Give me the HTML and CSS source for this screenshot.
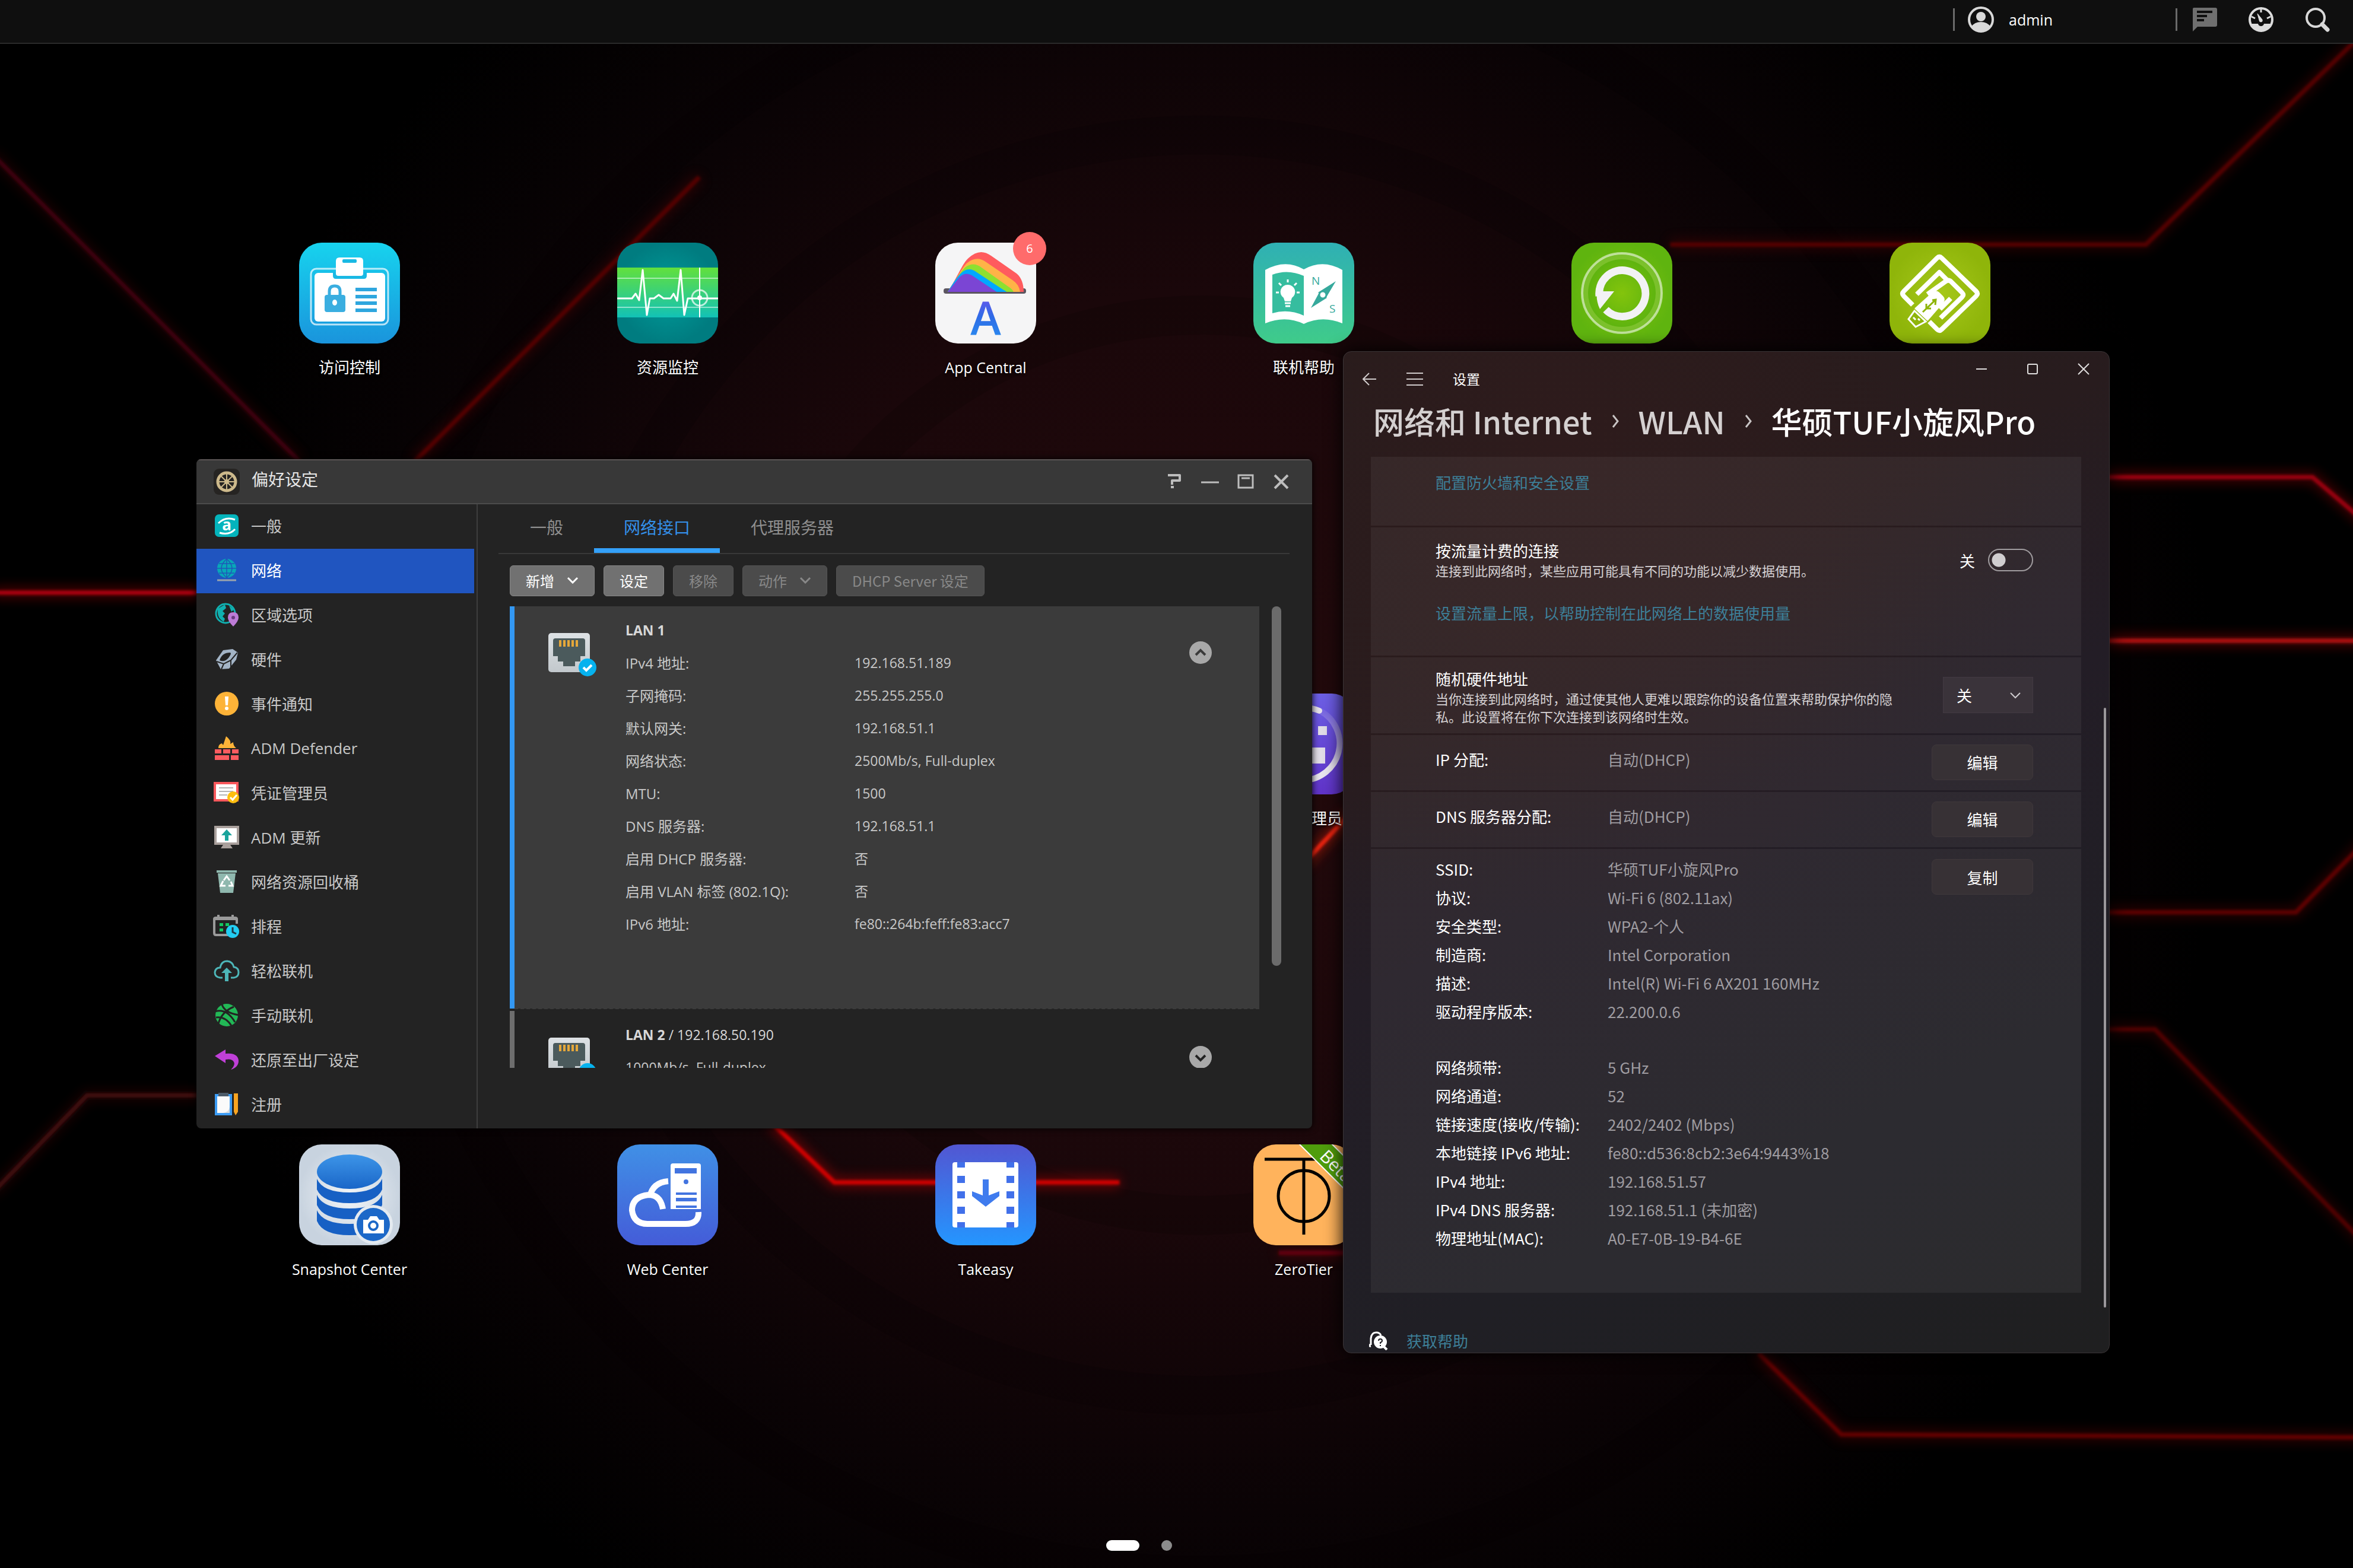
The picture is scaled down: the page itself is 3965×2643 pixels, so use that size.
FILE: index.html
```html
<!DOCTYPE html>
<html lang="zh-CN">
<head>
    <meta charset="UTF-8">
    <meta name="viewport" content="width=device-width, initial-scale=1.0">
    <title>ADM</title>
    <link rel="stylesheet" href="styles.css">
</head>
<body>

<!-- wallpaper -->
<svg class="wallpaper" viewBox="0 0 1568 1045" preserveAspectRatio="none" aria-hidden="true">
    <defs>
        <radialGradient id="wallGlow" gradientUnits="userSpaceOnUse" cx="800" cy="500" r="680">
            <stop offset="0" stop-color="#240a0c"/>
            <stop offset="0.45" stop-color="#1a070a"/>
            <stop offset="0.75" stop-color="#0a0305"/>
            <stop offset="1" stop-color="#000"/>
        </radialGradient>
        <filter id="soft" filterUnits="userSpaceOnUse" x="-50" y="-50" width="1700" height="1150"><feGaussianBlur stdDeviation="4"/></filter>
        <filter id="edge" filterUnits="userSpaceOnUse" x="-50" y="-50" width="1700" height="1150"><feGaussianBlur stdDeviation="0.8"/></filter>
        <g id="lines">
            <path d="M-5 103L200 308" stroke="#3c0407"/>
            <path d="M466 118L276 308" stroke="#520206"/>
            <path d="M1113 163H1430L1575 22" stroke="#520205"/>
            <path d="M1400 318H1541L1575 347" stroke="#960508"/>
            <path d="M1400 427H1575" stroke="#ac0c0c"/>
            <path d="M1400 608H1530L1575 562" stroke="#5c0406"/>
            <path d="M1400 686H1436L1575 828" stroke="#4e0305"/>
            <path d="M1172 902L1227 956L1575 958" stroke="#600306"/>
            <path d="M-5 395H140" stroke="#a80408"/>
            <path d="M-5 795L58 730H140" stroke="#400709"/>
            <path d="M514 748L556 788H746" stroke="#cf0000"/>
            <path d="M900 542L868 576" stroke="#e82408"/>
            <path d="M852 835H900" stroke="#5e0408"/>
        </g>
    </defs>
    <rect width="1568" height="1045" fill="#000"/>
    <rect width="1568" height="1045" fill="url(#wallGlow)"/>
    <g fill="none" stroke="#000" stroke-opacity="0.12" stroke-width="26">
        <circle cx="800" cy="510" r="300"/>
        <circle cx="800" cy="510" r="420"/>
        <circle cx="800" cy="510" r="540"/>
    </g>
    <use href="#lines" fill="none" stroke-width="7" opacity="0.45" filter="url(#soft)"/>
    <use href="#lines" fill="none" stroke-width="3" filter="url(#edge)"/>
</svg>

<header class="topbar">
    <span class="sep"></span>
    <button class="user" type="button">
        <svg viewBox="0 0 44 44" width="44" height="44"><circle cx="22" cy="22" r="20" fill="none" stroke="#d8d8d8" stroke-width="4"/><circle cx="22" cy="17" r="8" fill="#d8d8d8"/><path d="M6 34q5-8 16-8t16 8q-6 9-16 9T6 34z" fill="#d8d8d8"/></svg>
        <span>admin</span>
    </button>
    <span class="sep"></span>
    <div class="tray">
        <button type="button" aria-label="消息">
            <svg viewBox="0 0 42 42" width="42" height="42"><path d="M3 1h36q3 0 3 3v26q0 3-3 3H9l-8 8V3q0-2 2-2z" fill="#6f6f6f"/><path d="M8 8h26M8 15h17M8 22h12" stroke="#0f0f0f" stroke-width="4"/></svg>
        </button>
        <button type="button" aria-label="仪表板">
            <svg viewBox="0 0 42 42" width="42" height="42"><circle cx="21" cy="21" r="19" fill="none" stroke="#dcdcdc" stroke-width="4"/><path d="M4 28h12q1 4 5 4t5-4h12q-5 12-17 12T4 28z" fill="#dcdcdc"/><path d="M21 3v6M5 16l6 3M37 16l-6 3" stroke="#dcdcdc" stroke-width="3"/><path d="M15 11l8 10q1 4-2 4t-3-3z" fill="#dcdcdc" stroke="#dcdcdc"/></svg>
        </button>
        <button type="button" aria-label="搜索">
            <svg viewBox="0 0 42 42" width="42" height="42"><circle cx="18" cy="18" r="15" fill="none" stroke="#d8d8d8" stroke-width="4"/><path d="M29 29l9 9" stroke="#d8d8d8" stroke-width="7" stroke-linecap="round"/></svg>
        </button>
    </div>
</header>

<main class="desktop">
    <a class="app" href="#">
        <span class="app-icon">
        <svg viewBox="0 0 170 170">
            <defs><linearGradient id="g1" x2="0" y2="1"><stop stop-color="#17d3ee"/><stop offset="1" stop-color="#1a94dc"/></linearGradient></defs>
            <rect width="170" height="170" fill="url(#g1)"/>
            <rect x="20" y="44" width="130" height="94" rx="9" fill="none" stroke="#fff" stroke-opacity="0.7" stroke-width="3"/>
            <rect x="26" y="51" width="119" height="82" rx="6" fill="#fff"/>
            <path d="M57 50h57v6q0 5-5 5H62q-5 0-5-5z" fill="#19b9e4"/>
            <path d="M62 31q0-6 6-6h34q6 0 6 6v21q0 4-4 4H66q-4 0-4-4z" fill="#fff"/>
            <rect x="73" y="28" width="24" height="6" rx="2" fill="#19b9e4"/>
            <path d="M51 90v-8q0-9 9-9t9 9v8" fill="none" stroke="#3aaee0" stroke-width="5"/>
            <rect x="43" y="88" width="35" height="29" rx="4" fill="#3aaee0"/>
            <ellipse cx="60" cy="101" rx="4" ry="5" fill="#fff"/>
            <path d="M95 79h36M95 91h36M95 102h36M95 114h36" stroke="#2ea6de" stroke-width="6"/>
        </svg>
        </span>
        <span class="app-name">访问控制</span>
    </a>
    <a class="app" href="#">
        <span class="app-icon">
        <svg viewBox="0 0 170 170">
            <defs>
                <linearGradient id="g2" x2="0" y2="1"><stop stop-color="#62e03c"/><stop offset="1" stop-color="#12c2b6"/></linearGradient>
                <radialGradient id="g2b"><stop stop-color="#009c9a"/><stop offset="1" stop-color="#007c80"/></radialGradient>
            </defs>
            <rect width="170" height="170" fill="url(#g2b)"/>
            <rect y="42" width="170" height="84" fill="url(#g2)"/>
            <path d="M0 60h170M0 109h170" stroke="#fff" stroke-opacity="0.5" stroke-width="2"/>
            <path d="M139 42v84" stroke="#fff" stroke-width="2"/>
            <path d="M0 94h25l6-8 6 11 6-51 7 76 5-28h7l8-6 8 6h12l5-8 6 12 6-52 6 76 6-28h51" fill="none" stroke="#fff" stroke-width="3" stroke-linejoin="round"/>
            <circle cx="139" cy="93" r="13" fill="none" stroke="#fff" stroke-opacity="0.7" stroke-width="3"/>
            <circle cx="139" cy="93" r="4" fill="#fff"/>
        </svg>
        </span>
        <span class="app-name">资源监控</span>
    </a>
    <a class="app" href="#">
        <span class="app-icon">
        <svg viewBox="0 0 170 170">
            <defs>
                <linearGradient id="g3" x2="0" y2="1"><stop stop-color="#8a4af0"/><stop offset="0.5" stop-color="#2e6be6"/><stop offset="1" stop-color="#2a9af4"/></linearGradient>
                <clipPath id="c3"><rect width="170" height="83"/></clipPath>
            </defs>
            <rect width="170" height="170" fill="#f5f5f6"/>
            <rect x="14" y="77" width="139" height="9" rx="4" fill="#5b5560"/>
            <g clip-path="url(#c3)">
                <path d="M20 84C38 58 46 34 56 26q19-18 38-4l43 30q12 10 12 32z" fill="#ff5b5e"/>
                <path d="M20 84C38 60 44 42 54 34q16-13 32-1l44 30q12 8 13 21z" fill="#ffb347"/>
                <path d="M20 84C36 62 42 50 50 42q14-11 28 0l45 32q8 5 9 10z" fill="#8de030"/>
                <path d="M20 84C32 66 36 58 45 50q12-10 25 0l44 29q6 3 7 5z" fill="#00a8ff"/>
                <path d="M20 84l21-26q10-10 22-2l42 28z" fill="#7b45d4"/>
            </g>
            <text class="icon-a" x="85" y="155" text-anchor="middle" fill="url(#g3)">A</text>
        </svg>
        </span>
        <span class="badge">6</span>
        <span class="app-name" lang="en">App Central</span>
    </a>
    <a class="app" href="#">
        <span class="app-icon">
        <svg viewBox="0 0 170 170">
            <defs><linearGradient id="g4" x2="0" y2="1"><stop stop-color="#2fb0b4"/><stop offset="1" stop-color="#3fcb8a"/></linearGradient></defs>
            <rect width="170" height="170" fill="url(#g4)"/>
            <path d="M20 46q34-19 65-1 32-18 65 1v90q-34-14-65 1-31-15-65-1z" fill="#fff"/>
            <path d="M32 54q26-10 53 2v67q-26-12-53-4z" fill="#36bd9f"/>
            <path d="M58 71a12 12 0 0 1 7 22l-2 6H53l-2-6a12 12 0 0 1 7-22z" fill="#fff"/>
            <path d="M53 102h10M54 107h8M58 62v5M43 68l4 4M73 68l-4 4M38 84h5M73 84h5" stroke="#fff" stroke-width="3"/>
            <path d="M139 65l-16 27-14-8zM97 110l14-26 13 9z" fill="#36a99c"/>
            <circle cx="117" cy="88" r="6" fill="#fff" stroke="#36a99c" stroke-width="3"/>
            <text class="icon-ns" x="98" y="71">N</text>
            <text class="icon-ns" x="128" y="118">S</text>
        </svg>
        </span>
        <span class="app-name">联机帮助</span>
    </a>
    <a class="app" href="#" aria-label="备份与还原">
        <span class="app-icon">
        <svg viewBox="0 0 170 170">
            <defs><radialGradient id="g5"><stop stop-color="#83c40c"/><stop offset="1" stop-color="#5fb40f"/></radialGradient></defs>
            <rect width="170" height="170" fill="url(#g5)"/>
            <circle cx="85" cy="85" r="67" fill="#fff" fill-opacity="0.12" stroke="#fff" stroke-opacity="0.55" stroke-width="4"/>
            <circle cx="85" cy="85" r="57" fill="url(#g5)"/>
            <path d="M58 113A39 39 0 1 0 47 90" fill="none" stroke="#f2f2f4" stroke-width="13"/>
            <path d="M43 82h29l-24 30q-7-14-5-30z" fill="#f2f2f4"/>
        </svg>
        </span>
    </a>
    <a class="app" href="#" aria-label="外接设备">
        <span class="app-icon">
        <svg viewBox="0 0 170 170">
            <defs><radialGradient id="g6"><stop stop-color="#a6c81a"/><stop offset="1" stop-color="#8fb50a"/></radialGradient></defs>
            <rect width="170" height="170" fill="url(#g6)"/>
            <g fill="none" stroke="#fff" stroke-width="8" stroke-linejoin="round">
                <path d="M39 105L24 90q-4-4 0-8l56-56q4-4 8 0l58 56q4 4 0 8l-58 56q-4 4-8 0l-13-13"/>
                <path d="M46 87l38-37 13 13"/>
                <path d="M64 87l31-22q5-3 9 1l18 18q4 4 0 8l-36 35M85 112l18-18"/>
            </g>
            <path d="M74 84q5-3 9 1l6 6q4 4 1 9l-26 30-20-19z" fill="#fff" stroke="#fff" stroke-width="3" stroke-linejoin="round"/>
            <path d="M42 115l19 18-17 9-12-13z" fill="#8fb50a" stroke="#fff" stroke-width="3"/>
            <path d="M40 126l4 4M48 128l3 3" stroke="#fff" stroke-width="3"/>
            <path d="M56 117l22-21M62 103v8h8M72 97l6-1-1 9" fill="none" stroke="#8fb50a" stroke-width="3"/>
        </svg>
        </span>
    </a>
    <a class="app app-mid" href="#">
        <span class="app-icon">
        <svg viewBox="0 0 170 170">
            <defs>
                <linearGradient id="g7" x2="0" y2="1"><stop stop-color="#6c5fe4"/><stop offset="1" stop-color="#6033c8"/></linearGradient>
                <linearGradient id="g7b" x2="0" y2="1"><stop stop-color="#e8e4ee" stop-opacity="0.1"/><stop offset="0.5" stop-color="#e8e4ee" stop-opacity="0.6"/><stop offset="0.8" stop-color="#e8e4ee"/></linearGradient>
            </defs>
            <rect width="170" height="170" fill="url(#g7)"/>
            <path d="M112 29A62 62 0 0 1 85 146" fill="none" stroke="url(#g7b)" stroke-width="10"/>
            <path d="M85 146A62 62 0 0 1 85 24q14 0 26 5" fill="none" stroke="#e4e0ea" stroke-width="10" stroke-linecap="round"/>
            <path d="M109 55h15v15h-15zM93 91h28v27H93z" fill="#e0dce6"/>
        </svg>
        </span>
        <span class="app-name">系统管理员</span>
    </a>
    <a class="app app-last" href="#">
        <span class="app-icon">
        <svg viewBox="0 0 170 170">
            <defs>
                <radialGradient id="g8"><stop stop-color="#f2f5f8"/><stop offset="1" stop-color="#c8d3df"/></radialGradient>
                <linearGradient id="g8b" x2="0" y2="1"><stop stop-color="#3d95e8"/><stop offset="1" stop-color="#1a66c8"/></linearGradient>
            </defs>
            <rect width="170" height="170" fill="url(#g8)"/>
            <ellipse cx="85" cy="46" rx="55" ry="29" fill="url(#g8b)"/>
            <g fill="#1760c4">
                <path d="M30 58q10 23 55 23t55-23v18q-10 23-55 23T30 76z"/>
                <path d="M30 85q10 23 55 23t55-23v17q-10 24-55 24T30 102z"/>
                <path d="M30 111q10 23 55 23t55-23v18q-10 24-55 24T30 129z"/>
            </g>
            <circle cx="125" cy="135" r="33" fill="#e4eaf0"/>
            <circle cx="125" cy="135" r="28" fill="#1c68c8"/>
            <path d="M108 127h8l4-6h11l4 6h8v23h-35z" fill="#fff"/>
            <circle cx="125" cy="137" r="7" fill="#fff" stroke="#1c68c8" stroke-width="4"/>
        </svg>
        </span>
        <span class="app-name" lang="en">Snapshot Center</span>
    </a>
    <a class="app" href="#">
        <span class="app-icon">
        <svg viewBox="0 0 170 170">
            <defs><linearGradient id="g9" x2="0" y2="1"><stop stop-color="#4090e6"/><stop offset="1" stop-color="#445cd8"/></linearGradient></defs>
            <rect width="170" height="170" fill="url(#g9)"/>
            <path d="M90 36q0-4 4-4h43q4 0 4 4v73H90z" fill="#fff"/>
            <path d="M97 40h37v9H97zM99 81h35v4H99zM99 90h35v6H99zM99 103h35v4H99z" fill="#4274e0"/>
            <circle cx="116" cy="63" r="4" fill="#4274e0"/>
            <path d="M86 62q-26 2-31 26M77 109q-4-24-24-24-28 3-28 26 3 23 26 23h64q23 0 22-20" fill="none" stroke="#fff" stroke-width="10"/>
        </svg>
        </span>
        <span class="app-name" lang="en">Web Center</span>
    </a>
    <a class="app" href="#">
        <span class="app-icon">
        <svg viewBox="0 0 170 170">
            <defs><linearGradient id="g10" x2="0" y2="1"><stop stop-color="#5256d2"/><stop offset="1" stop-color="#2496ff"/></linearGradient></defs>
            <rect width="170" height="170" fill="url(#g10)"/>
            <rect x="29" y="30" width="111" height="110" rx="4" fill="#fff"/>
            <path d="M37 30h13v9H37zM37 53h13v12H37zM37 79h13v12H37zM37 105h13v12H37zM37 131h13v9H37zM120 30h13v9h-13zM120 53h13v12h-13zM120 79h13v12h-13zM120 105h13v12h-13zM120 131h13v9h-13z" fill="#4170ea"/>
            <path d="M80 59h10v27l18-7v8l-23 18-23-18v-8l18 7z" fill="#3f7bee"/>
        </svg>
        </span>
        <span class="app-name" lang="en">Takeasy</span>
    </a>
    <a class="app" href="#">
        <span class="app-icon">
        <svg viewBox="0 0 170 170">
            <rect width="170" height="170" fill="#ffb35c"/>
            <path d="M19 25h132M85 25v127" stroke="#000" stroke-width="5"/>
            <circle cx="85" cy="87" r="43" fill="none" stroke="#000" stroke-width="5"/>
            <path d="M77 -1L171 93V38L132 -1z" fill="#4f9d0c" stroke="#fff" stroke-width="2"/>
            <text class="icon-beta" transform="translate(110 22) rotate(45)">Beta</text>
        </svg>
        </span>
        <span class="app-name" lang="en">ZeroTier</span>
    </a>
</main>

<nav class="pager" aria-label="桌面分页">
    <button class="page active" type="button" aria-label="第 1 页"></button>
    <button class="page" type="button" aria-label="第 2 页"></button>
</nav>

<!-- ADM preferences -->
<section class="window prefs">
    <header class="prefs-head">
        <svg viewBox="0 0 44 44" width="44" height="44"><rect width="44" height="44" rx="9" fill="#262422"/><circle cx="22" cy="22" r="15" fill="none" stroke="#cdb98b" stroke-width="5"/><path d="M22 8v28M8 22h28M12 12l20 20M32 12L12 32" stroke="#cdb98b" stroke-width="2"/><circle cx="22" cy="22" r="4" fill="#cdb98b"/></svg>
        <h1>偏好设定</h1>
        <div class="controls">
            <button type="button" aria-label="说明"><svg viewBox="0 0 30 30" width="30" height="30"><path d="M4 4h20v9H11v7M9 24h5" fill="none" stroke="#bdbdbd" stroke-width="4" stroke-linejoin="round"/></svg></button>
            <button type="button" aria-label="最小化"><svg viewBox="0 0 30 30" width="30" height="30"><path d="M0 16h30" stroke="#bdbdbd" stroke-width="3"/></svg></button>
            <button type="button" aria-label="最大化"><svg viewBox="0 0 30 30" width="30" height="30"><path d="M3 4h24v21H3zM8 9h14" fill="none" stroke="#bdbdbd" stroke-width="3"/></svg></button>
            <button type="button" aria-label="关闭"><svg viewBox="0 0 30 30" width="30" height="30"><path d="M4 4l22 22M26 4L4 26" stroke="#bdbdbd" stroke-width="4"/></svg></button>
        </div>
    </header>
    <div class="prefs-body">
        <nav class="side">
            <a href="#"><svg viewBox="0 0 40 40"><rect y="1" width="40" height="38" rx="7" fill="#04b4bc"/><text class="icon-small-a" x="20" y="28" text-anchor="middle">a</text><path d="M6 16Q18 4 34 10M34 26Q24 37 8 32" fill="none" stroke="#fff" stroke-width="3"/></svg>一般</a>
            <a href="#" class="current" aria-current="page"><svg viewBox="0 0 40 40"><circle cx="20" cy="17" r="16" fill="#08a8b8"/><path d="M4 17h32M7 9h26M7 25h26M20 1v32M20 1q-18 16 0 32M20 1q18 16 0 32" fill="none" stroke="#1f57b8" stroke-width="1.5"/><path d="M4 37h32" stroke="#9aa4ac" stroke-width="3"/></svg>网络</a>
            <a href="#"><svg viewBox="0 0 40 40"><circle cx="18" cy="18" r="16" fill="none" stroke="#10b0b0" stroke-width="3"/><path d="M5 10l12-7 2 6-6 5 4 4-4 5 4 4-2 5Q3 26 5 10zM24 5l9 6-5 4z" fill="#10b0b0"/><path d="M31 16q9 0 9 9 0 6-9 15-9-9-9-15 0-9 9-9z" fill="#bd7bd6"/><circle cx="31" cy="25" r="3" fill="#6b3c80"/></svg>区域选项</a>
            <a href="#"><svg viewBox="0 0 40 40"><path d="M2 22L14 5l16-2 9 6-3 12-12 15-14 1z" fill="#a3b4c6"/><path d="M8 22q4-13 18-13 3 1-3 9-7 8-15 4z" fill="#232323"/><path d="M3 24l12 4 12-6 11-13M15 28l-4 9M27 22l0 12" fill="none" stroke="#232323" stroke-width="2"/></svg>硬件</a>
            <a href="#"><svg viewBox="0 0 40 40"><circle cx="20" cy="20" r="20" fill="#fdb338"/><path d="M17 8h6l-1 15h-4z" fill="#fff"/><circle cx="20" cy="28" r="3" fill="#fff"/></svg>事件通知</a>
            <a href="#"><svg viewBox="0 0 40 40"><path d="M6 20q0-7 6-8l2 3 5-15q9 7 7 13l5-3q0 6 5 10z" fill="#fdb338"/><path d="M0 22h11v7H0zM14 22h12v7H14zM29 22h11v7H29zM0 32h24v8H0zM27 32h13v8H27z" fill="#fb5b5f"/></svg>ADM Defender</a>
            <a href="#"><svg viewBox="0 0 40 40"><path d="M0 4h38v29H0z" fill="#fff" stroke="#f8585c" stroke-width="4"/><path d="M7 12h24M7 18h24M7 24h14" stroke="#b4b4b4" stroke-width="2"/><circle cx="31" cy="28" r="10" fill="#fdbe10"/><path d="M26 28l4 4 7-8" fill="none" stroke="#fff" stroke-width="3"/></svg>凭证管理员</a>
            <a href="#"><svg viewBox="0 0 40 40"><path d="M1 3h38v28H1z" fill="#fff" stroke="#a9a09c" stroke-width="4"/><path d="M14 33h12l4 6H10z" fill="#a9a09c"/><path d="M20 7l9 10h-6v9h-6v-9h-6z" fill="#1ba49c"/></svg>ADM 更新</a>
            <a href="#"><svg viewBox="0 0 40 40"><path d="M3 1h34v4H3zM5 6h30l-4 33H9z" fill="#8fb8ae"/><path d="M15 18l5-7 5 7M27 20l3 7h-7M18 27h-8l4-8" fill="none" stroke="#fff" stroke-width="3"/></svg>网络资源回收桶</a>
            <a href="#"><svg viewBox="0 0 40 40"><path d="M22 35H2q-3 0-3-3V8q0-2 3-2h32q3 0 3 2v8M-1 8h38M6 1v6M30 1v6" fill="none" stroke="#9a9a9a" stroke-width="4"/><path d="M8 15h6v5H8zM18 15h6v5h-6zM8 24h6v5H8z" fill="#12c860"/><circle cx="30" cy="29" r="11" fill="#22cdf2"/><path d="M30 22v8l6 3" fill="none" stroke="#1c3a48" stroke-width="3"/></svg>排程</a>
            <a href="#"><svg viewBox="0 0 40 40"><path d="M13 32H9Q0 31 0 23q1-8 9-8 2-11 12-11 9 1 11 10 8 1 8 9 0 8-8 9h-5" fill="none" stroke="#4db6b8" stroke-width="3"/><path d="M20 15l9 9h-6v14h-6V24h-6z" fill="#4db6b8"/></svg>轻松联机</a>
            <a href="#"><svg viewBox="0 0 40 40"><circle cx="20" cy="20" r="19" fill="#22b856"/><path d="M0 14q20-6 34 18M6 34Q12 14 32 6M12 2q4 14 28 18M2 24q16-2 26 14" fill="none" stroke="#232323" stroke-width="3"/></svg>手动联机</a>
            <a href="#"><svg viewBox="0 0 40 40"><path d="M0 14L18 3v7q21-2 22 12 0 11-13 15 8-8 5-13-3-6-14-4v6z" fill="#c040d8"/></svg>还原至出厂设定</a>
            <a href="#"><svg viewBox="0 0 40 40"><path d="M0 3h29v36H0z" fill="#3c9cf4"/><path d="M4 7h21v28H4z" fill="#fafafa"/><path d="M25 25v10H14q10-2 11-10z" fill="#d8dce0"/><path d="M6 1h17v6H6z" fill="#4c5a68"/><path d="M32 2h7v31l-4 6-3-6z" fill="#f8a420"/></svg>注册</a>
        </nav>
        <div class="pane">
            <div class="tabs" role="tablist">
                <button type="button" role="tab">一般</button>
                <button type="button" role="tab" class="on" aria-selected="true">网络接口</button>
                <button type="button" role="tab">代理服务器</button>
            </div>
            <div class="tools">
                <button type="button">新增<svg viewBox="0 0 20 12" width="20" height="12"><path d="M2 2l8 8 8-8" fill="none" stroke="currentColor" stroke-width="3"/></svg></button>
                <button type="button">设定</button>
                <button type="button" disabled>移除</button>
                <button type="button" disabled>动作<svg viewBox="0 0 20 12" width="20" height="12"><path d="M2 2l8 8 8-8" fill="none" stroke="currentColor" stroke-width="3"/></svg></button>
                <button type="button" disabled>DHCP Server 设定</button>
            </div>
            <div class="list-wrap">
                <div class="list">
                    <article class="lan open">
                        <svg class="port" viewBox="0 0 82 82"><defs><linearGradient id="pg" x2="0" y2="1"><stop stop-color="#dde1e4"/><stop offset="1" stop-color="#c2c8cc"/></linearGradient></defs><rect y="1" width="70" height="66" rx="5" fill="url(#pg)"/><path d="M8 14q0-4 4-4h46q4 0 4 4v26h-8v9h-9v8H25v-8h-9v-9H8z" fill="#4b5a5c"/><path d="M20 13v11M27 13v11M34 13v11M41 13v11M48 13v11" stroke="#e6a83a" stroke-width="4"/><circle cx="66" cy="59" r="15" fill="#06b2ee"/><path d="M59 59l5 5 9-9" fill="none" stroke="#fff" stroke-width="4"/></svg>
                        <div class="lan-info">
                            <h2>LAN 1</h2>
                            <dl>
                                <dt>IPv4 地址:</dt><dd>192.168.51.189</dd>
                                <dt>子网掩码:</dt><dd>255.255.255.0</dd>
                                <dt>默认网关:</dt><dd>192.168.51.1</dd>
                                <dt>网络状态:</dt><dd>2500Mb/s, Full-duplex</dd>
                                <dt>MTU:</dt><dd>1500</dd>
                                <dt>DNS 服务器:</dt><dd>192.168.51.1</dd>
                                <dt>启用 DHCP 服务器:</dt><dd>否</dd>
                                <dt>启用 VLAN 标签 (802.1Q):</dt><dd>否</dd>
                                <dt>IPv6 地址:</dt><dd>fe80::264b:feff:fe83:acc7</dd>
                            </dl>
                        </div>
                        <button class="fold" type="button" aria-label="收起"><svg viewBox="0 0 38 38" width="38" height="38"><circle cx="19" cy="19" r="19" fill="#a8a8a8"/><path d="M11 23l8-8 8 8" fill="none" stroke="#3b3b3b" stroke-width="4"/></svg></button>
                    </article>
                    <article class="lan">
                        <svg class="port" viewBox="0 0 82 82"><rect y="1" width="70" height="66" rx="5" fill="url(#pg)"/><path d="M8 14q0-4 4-4h46q4 0 4 4v26h-8v9h-9v8H25v-8h-9v-9H8z" fill="#4b5a5c"/><path d="M20 13v11M27 13v11M34 13v11M41 13v11M48 13v11" stroke="#e6a83a" stroke-width="4"/><circle cx="66" cy="59" r="15" fill="#06b2ee"/></svg>
                        <div class="lan-info">
                            <h2>LAN 2 <span>/ 192.168.50.190</span></h2>
                            <p>1000Mb/s, Full-duplex</p>
                        </div>
                        <button class="fold" type="button" aria-label="展开"><svg viewBox="0 0 38 38" width="38" height="38"><circle cx="19" cy="19" r="19" fill="#a8a8a8"/><path d="M11 16l8 8 8-8" fill="none" stroke="#232323" stroke-width="4"/></svg></button>
                    </article>
                </div>
                <div class="scroll"></div>
            </div>
        </div>
    </div>
</section>

<!-- Windows settings -->
<section class="window settings">
    <header class="set-head">
        <button type="button" aria-label="返回"><svg viewBox="0 0 24 24" width="24" height="24"><path d="M23 12H2M11 2L1 12l10 10" fill="none" stroke="#cfcaca" stroke-width="2"/></svg></button>
        <button type="button" aria-label="菜单"><svg viewBox="0 0 28 24" width="28" height="24"><path d="M0 2h28M0 12h28M0 22h28" stroke="#cfcaca" stroke-width="2"/></svg></button>
        <span class="set-title">设置</span>
        <div class="set-controls">
            <button type="button" aria-label="最小化"><svg viewBox="0 0 20 20" width="20" height="20"><path d="M1 10h18" stroke="#e0dede" stroke-width="2"/></svg></button>
            <button type="button" aria-label="最大化"><svg viewBox="0 0 20 20" width="20" height="20"><rect x="2" y="2" width="16" height="16" rx="2" fill="none" stroke="#e0dede" stroke-width="2"/></svg></button>
            <button type="button" aria-label="关闭"><svg viewBox="0 0 20 20" width="20" height="20"><path d="M1 1l18 18M19 1L1 19" stroke="#e0dede" stroke-width="2"/></svg></button>
        </div>
    </header>
    <h1 class="crumbs">
        <a href="#">网络和 Internet</a>
        <svg viewBox="0 0 14 24" width="14" height="24"><path d="M3 2l8 10-8 10" fill="none" stroke="#c8c4c4" stroke-width="3"/></svg>
        <a href="#">WLAN</a>
        <svg viewBox="0 0 14 24" width="14" height="24"><path d="M3 2l8 10-8 10" fill="none" stroke="#c8c4c4" stroke-width="3"/></svg>
        <span>华硕TUF小旋风Pro</span>
    </h1>
    <div class="cards">
        <div class="card card-fw">
            <a href="#">配置防火墙和安全设置</a>
        </div>
        <div class="card card-meter">
            <div class="row">
                <div class="text">
                    <h3>按流量计费的连接</h3>
                    <p>连接到此网络时，某些应用可能具有不同的功能以减少数据使用。</p>
                </div>
                <label class="toggle">关<input type="checkbox" role="switch"></label>
            </div>
            <a href="#">设置流量上限，以帮助控制在此网络上的数据使用量</a>
        </div>
        <div class="card card-random">
            <div class="row">
                <div class="text">
                    <h3 id="rand">随机硬件地址</h3>
                    <p>当你连接到此网络时，通过使其他人更难以跟踪你的设备位置来帮助保护你的隐私。此设置将在你下次连接到该网络时生效。</p>
                </div>
                <div class="pick">
                    <select aria-labelledby="rand"><option>关</option><option>开</option></select>
                    <svg viewBox="0 0 20 12" width="20" height="12"><path d="M2 2l8 8 8-8" fill="none" stroke="#cfcccf" stroke-width="2"/></svg>
                </div>
            </div>
        </div>
        <div class="card card-line">
            <span>IP 分配:</span><span class="val">自动(DHCP)</span><button type="button">编辑</button>
        </div>
        <div class="card card-line">
            <span>DNS 服务器分配:</span><span class="val">自动(DHCP)</span><button type="button">编辑</button>
        </div>
        <div class="card card-props">
            <div class="props">
                <dl>
                    <dt>SSID:</dt><dd>华硕TUF小旋风Pro</dd>
                    <dt>协议:</dt><dd>Wi-Fi 6 (802.11ax)</dd>
                    <dt>安全类型:</dt><dd>WPA2-个人</dd>
                    <dt>制造商:</dt><dd>Intel Corporation</dd>
                    <dt>描述:</dt><dd>Intel(R) Wi-Fi 6 AX201 160MHz</dd>
                    <dt>驱动程序版本:</dt><dd>22.200.0.6</dd>
                </dl>
                <dl>
                    <dt>网络频带:</dt><dd>5 GHz</dd>
                    <dt>网络通道:</dt><dd>52</dd>
                    <dt>链接速度(接收/传输):</dt><dd>2402/2402 (Mbps)</dd>
                    <dt>本地链接 IPv6 地址:</dt><dd>fe80::d536:8cb2:3e64:9443%18</dd>
                    <dt>IPv4 地址:</dt><dd>192.168.51.57</dd>
                    <dt>IPv4 DNS 服务器:</dt><dd>192.168.51.1 (未加密)</dd>
                    <dt>物理地址(MAC):</dt><dd>A0-E7-0B-19-B4-6E</dd>
                </dl>
            </div>
            <button type="button">复制</button>
        </div>
    </div>
    <footer class="set-foot">
        <svg viewBox="0 0 32 32" width="32" height="32"><path d="M2 22q-3 4 1 3M3 23V12Q4 2 12 2q6 0 8 5" fill="none" stroke="#fff" stroke-width="3"/><circle cx="19" cy="18" r="11" fill="#fff"/><path d="M24 25l6 6" stroke="#fff" stroke-width="4"/><path d="M16 16q0-3 3-3t3 3q0 2-3 3v2M19 23v2" fill="none" stroke="#201f25" stroke-width="2"/></svg>
        <a href="#">获取帮助</a>
    </footer>
    <div class="set-scroll"></div>
</section>

</body>
</html>
```
FILE: styles.css
```css
* {
    box-sizing: border-box;
}
body {
    position: relative;
    margin: 0;
    min-height: 100vh;
    display: flex;
    flex-direction: column;
    overflow: hidden;
    background: #000;
    color: #fff;
    font-family: "Open Sans", "Noto Sans CJK SC", sans-serif;
    font-size: 26px;
}
h1, h2, h3, p, dl, dd {
    margin: 0;
    font-weight: 400;
}
button {
    font: inherit;
    color: inherit;
    background: none;
    border: 0;
    padding: 0;
}
a {
    color: inherit;
    text-decoration: none;
}
svg {
    display: block;
    flex: none;
}
.wallpaper {
    position: absolute;
    inset: 0;
    width: 100%;
    height: 100%;
    z-index: -1;
}

/* top bar */
.topbar {
    display: flex;
    align-items: center;
    justify-content: flex-end;
    height: 74px;
    padding: 0 39px 6px 0;
    background: #0f0f0f;
    border-bottom: 2px solid #2a2a2a;
}
.sep {
    width: 3px;
    height: 38px;
    background: #6a6a6a;
}
.user {
    display: flex;
    align-items: center;
    gap: 25px;
    width: 350px;
    margin-left: 22px;
    font-size: 25px;
}
.tray {
    display: flex;
    gap: 53px;
    margin-left: 25px;
}

/* desktop */
.desktop {
    flex: 1;
    display: grid;
    grid-template-columns: repeat(6, 1fr);
    grid-template-rows: 760px 760px auto;
    padding: 335px 428px 0 321px;
}
.app {
    position: relative;
    display: flex;
    flex-direction: column;
    align-items: center;
    justify-self: center;
    align-self: start;
    gap: 20px;
}
.app-mid {
    grid-column: 4;
}
.app-last {
    grid-column: 1;
}
.app-icon {
    width: 170px;
    height: 170px;
    border-radius: 38px;
    overflow: hidden;
}
.app-name {
    line-height: 40px;
    white-space: nowrap;
    text-shadow: 0 2px 4px #000;
}
.app-name:lang(en) {
    font-size: 25px;
}
.badge {
    position: absolute;
    top: -18px;
    left: 50%;
    width: 56px;
    margin-left: 46px;
    border-radius: 28px;
    background: #ff6b6b;
    font-size: 20px;
    line-height: 56px;
    text-align: center;
}
.icon-a {
    font: 600 78px "Open Sans", sans-serif;
}
.icon-ns {
    font: 19px "Open Sans", sans-serif;
    fill: #36a99c;
}
.icon-beta {
    font: 30px "Open Sans", sans-serif;
    fill: #fff;
}
.icon-small-a {
    font: 700 26px "Open Sans", sans-serif;
    fill: #fff;
}
.pager {
    position: absolute;
    bottom: 29px;
    left: 47%;
    display: flex;
    gap: 37px;
}
.page {
    width: 18px;
    height: 18px;
    border-radius: 9px;
    background: #8c8c8c;
}
.page.active {
    width: 56px;
    background: #fff;
}

/* preferences window */
.window {
    position: absolute;
    overflow: hidden;
}
.prefs {
    left: 331px;
    top: 774px;
    width: 1880px;
    border-radius: 8px;
    background: #232323;
    color: #c8c8c8;
    box-shadow: 0 0 12px #000;
}
.prefs-head {
    display: flex;
    align-items: center;
    height: 76px;
    padding: 0 37px 0 29px;
    background: #383838;
    border-top: 2px solid #5c5656;
    border-bottom: 2px solid #4c4c4c;
}
.prefs-head h1 {
    flex: 1;
    margin-left: 20px;
    padding-bottom: 8px;
    font-size: 28px;
    line-height: 40px;
    color: #e6e6e6;
}
.controls {
    display: flex;
    gap: 30px;
}
.prefs-body {
    display: flex;
}
.side {
    width: 474px;
    padding: 0 4px 2px 0;
    border-right: 2px solid #3e3e3e;
}
.side a {
    display: flex;
    align-items: center;
    gap: 21px;
    height: 75px;
    padding: 0 0 3px 31px;
}
.side svg {
    width: 40px;
    height: 40px;
    overflow: visible;
}
.side .current {
    background: #2055c0;
    color: #fff;
}
.pane {
    flex: 1;
    padding: 0 38px 0 35px;
}
.tabs {
    display: flex;
    gap: 2px;
    padding-left: 3px;
    border-bottom: 2px solid #383838;
}
.tabs button {
    height: 82px;
    padding: 4px 50px 0;
    border-bottom: 8px solid transparent;
    font-size: 28px;
    line-height: 40px;
    color: #8f8f8f;
}
.tabs .on {
    border-color: #34a0f8;
    color: #3490ea;
}
.tools {
    display: flex;
    gap: 15px;
    padding: 19px 0 17px 19px;
}
.tools button {
    display: flex;
    align-items: center;
    gap: 21px;
    height: 52px;
    padding: 0 26px 2px;
    border: 1px solid #868686;
    border-radius: 6px;
    background: #717171;
    color: #fff;
    font-family: "Noto Sans CJK SC", sans-serif;
    font-size: 24px;
}
.tools button:disabled {
    background: #4b4b4b;
    border-color: #545454;
    color: #888;
}
.list-wrap {
    display: flex;
    gap: 21px;
    padding-left: 19px;
}
.list {
    flex: 1;
    height: 778px;
    overflow: hidden;
    font-size: 23px;
}
.lan {
    display: flex;
    align-items: flex-start;
    margin-top: 3px;
    padding: 0 80px 0 57px;
    border-left: 8px solid #6e6e6e;
}
.lan.open {
    min-height: 678px;
    margin-top: 0;
    margin-bottom: 4px;
    background: #3b3b3b;
    border-color: #3398f3;
}
.lan + .lan {
    position: relative;
}
.lan + .lan::before {
    content: "";
    position: absolute;
    top: -5px;
    left: 0;
    right: 0;
    border-top: 2px dashed #3c3c3c;
}
.port {
    width: 82px;
    height: 82px;
    margin-top: 44px;
}
.lan-info {
    flex: 1;
    margin-left: 48px;
    padding-top: 13px;
}
.lan h2, .lan p {
    font-size: 23px;
    line-height: 55px;
}
.lan h2 {
    font-weight: 700;
    color: #d8d8d8;
}
.lan h2 span {
    font-weight: 400;
}
.lan dl {
    display: grid;
    grid-template-columns: 386px 1fr;
    line-height: 55px;
}
.lan dt {
    font-size: 24px;
}
.fold {
    margin-top: 59px;
    border-radius: 19px;
}
.scroll {
    width: 16px;
    height: 606px;
    margin-right: 14px;
    border-radius: 8px;
    background: #6b6b6b;
}

/* settings window */
.settings {
    left: 2263px;
    top: 592px;
    width: 1292px;
    border-radius: 14px;
    border: 1px solid #3a3436;
    background: radial-gradient(circle at 28% 8%, #2e1b1c 0, rgba(46, 27, 28, 0) 46%), linear-gradient(155deg, #241d1c 0, #281c1e 28%, #231d26 48%, #201f25 75%, #1f1f20 100%);
    box-shadow: 0 0 30px #000;
    font-family: "Noto Sans CJK SC", sans-serif;
}
.set-head {
    display: flex;
    align-items: center;
    height: 92px;
    padding-left: 32px;
}
.set-head > button + button {
    margin-left: 50px;
}
.set-title {
    flex: 1;
    margin-left: 50px;
    padding-bottom: 2px;
    font-size: 23px;
    line-height: 34px;
}
.set-controls {
    display: flex;
    gap: 66px;
    padding: 0 33px 34px 0;
}
.crumbs {
    display: flex;
    align-items: center;
    gap: 32px;
    margin-top: -3px;
    padding: 0 50px;
    font-size: 52px;
    font-weight: 500;
    line-height: 56px;
    color: #d4d0d0;
    white-space: nowrap;
}
.crumbs span {
    color: #fff;
}
.cards {
    display: flex;
    flex-direction: column;
    gap: 3px;
    padding: 32px 47px 0 46px;
}
.card {
    padding: 0 81px 0 109px;
    background: rgba(255, 255, 255, 0.055);
}
.card a, .set-foot a {
    color: #3d7f98;
}
.card-fw {
    padding-top: 23px;
    padding-bottom: 53px;
    line-height: 40px;
}
.row {
    display: flex;
    justify-content: space-between;
}
.card h3 {
    font-size: 26px;
    line-height: 36px;
}
.card p {
    font-size: 22px;
    line-height: 30px;
    color: #d6d2d4;
}
.card-meter {
    padding-top: 21px;
    padding-bottom: 52px;
}
.card-meter > a {
    display: block;
    margin-top: 37px;
    line-height: 40px;
}
.toggle {
    display: flex;
    align-items: center;
    gap: 22px;
    height: 38px;
    margin-top: 15px;
}
.toggle input {
    appearance: none;
    width: 76px;
    height: 38px;
    margin: 0;
    border: 2px solid #a09c9f;
    border-radius: 19px;
    background: radial-gradient(circle at 16px 17px, #d0ced0 11px, transparent 12px);
}
.card-random {
    padding-top: 18px;
    padding-bottom: 14px;
}
.card-random .text {
    width: 790px;
}
.pick {
    position: relative;
    margin-top: 15px;
}
.pick select {
    appearance: none;
    width: 152px;
    height: 61px;
    padding: 0 22px;
    border: 1px solid #423a42;
    background: #3a333a;
    color: #fff;
    font: inherit;
}
.pick svg {
    position: absolute;
    right: 20px;
    top: 25px;
}
.card-line {
    display: grid;
    grid-template-columns: 290px 1fr auto;
    padding-top: 16px;
    padding-bottom: 17px;
    line-height: 50px;
}
.card button {
    width: 171px;
    height: 60px;
    border: 1px solid #3f383b;
    border-radius: 8px;
    background: #373135;
}
.card-props {
    display: flex;
    align-items: flex-start;
    padding-top: 10px;
    padding-bottom: 68px;
}
.card-props button {
    margin-top: 7px;
}
.props {
    flex: 1;
    display: flex;
    flex-direction: column;
    gap: 46px;
}
.props dl {
    display: grid;
    grid-template-columns: 290px 1fr;
    line-height: 48px;
}
.val, .props dd {
    color: #9f9ca1;
}
.set-foot {
    display: flex;
    align-items: center;
    gap: 31px;
    padding: 61px 0 0 43px;
    line-height: 40px;
}
.set-scroll {
    position: absolute;
    top: 600px;
    bottom: 76px;
    right: 5px;
    width: 4px;
    border-radius: 2px;
    background: #9a979b;
}
```
